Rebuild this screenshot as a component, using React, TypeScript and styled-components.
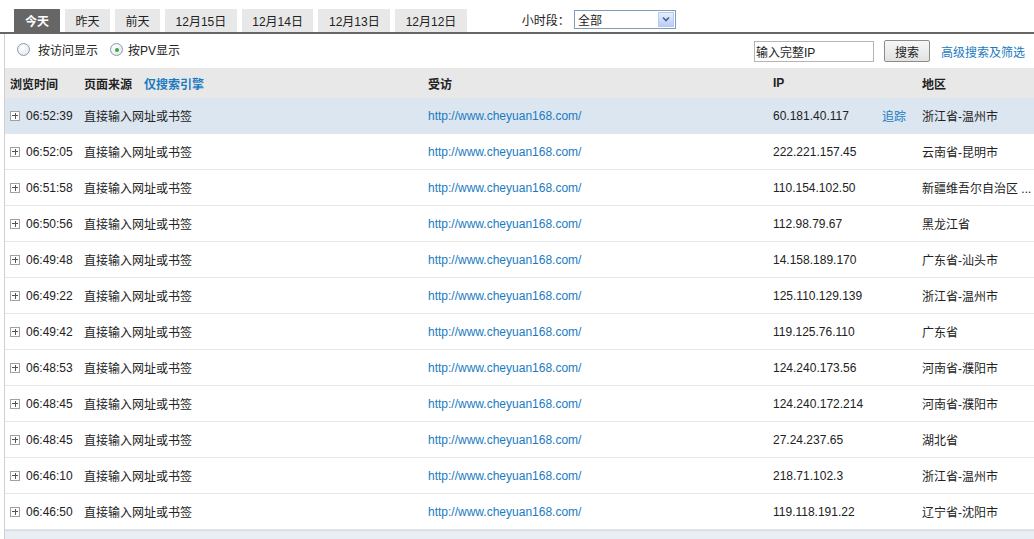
import { createGlobalStyle, styled } from "styled-components"

const GlobalStyle = createGlobalStyle`
  html, body {
    margin: 0;
    padding: 0;
    background: #fff;
    overflow: hidden;
  }
  body {
    font-family: "Liberation Sans", Arial, "Noto Sans CJK SC", sans-serif;
    font-size: 12px;
    color: #222;
  }
`

const Page = styled.div`
  width: 1034px;
  height: 539px;
  display: flex;
  flex-direction: column;
  overflow: hidden;
`

const TabBar = styled.div`
  display: flex;
  align-items: flex-end;
  gap: 5px;
  height: 32px;
  padding-left: 14px;
  border-bottom: 2px solid #666;
  flex-shrink: 0;
`

const Tab = styled.div<{ $active?: boolean }>`
  height: 23px;
  padding: 0 ${p => (p.$active ? "11px" : "10.5px")};
  display: flex;
  align-items: center;
  justify-content: center;
  background: ${p => (p.$active ? "#666" : "#e8e8e8")};
  color: ${p => (p.$active ? "#fff" : "#222")};
  font-weight: ${p => (p.$active ? "bold" : "normal")};
  font-size: 12px;
  cursor: pointer;
`

const HourPicker = styled.div`
  display: flex;
  align-items: center;
  margin-left: 50px;
  align-self: center;
  margin-top: 6px;
  gap: 4px;
`

const Select = styled.div`
  width: 102px;
  height: 19px;
  border: 1px solid #7f9db9;
  display: flex;
  align-items: center;
  justify-content: space-between;
  padding-left: 3px;
  box-sizing: border-box;
`

const SelectArrow = styled.div`
  width: 16px;
  height: 15px;
  margin-right: 1px;
  background: linear-gradient(#e6eefc, #b9cdf5);
  border: 1px solid #b7c9ef;
  box-sizing: border-box;
  display: flex;
  align-items: center;
  justify-content: center;
`

const Body = styled.div`
  margin-left: 4px;
  border-left: 1px solid #d0d0d0;
  display: flex;
  flex-direction: column;
  flex: 1;
`

const OptionsRow = styled.div`
  height: 34px;
  display: flex;
  align-items: center;
  padding-left: 12px;
  padding-right: 9px;
  box-sizing: border-box;
`

const RadioLabel = styled.label<{ $gap: number }>`
  display: flex;
  align-items: center;
  gap: ${p => p.$gap}px;
  margin-right: 12px;
  margin-top: -3px;
`

const RadioDot = styled.span<{ $checked?: boolean }>`
  width: 11px;
  height: 11px;
  border-radius: 50%;
  border: 1px solid #8a9bb0;
  background: radial-gradient(circle at 40% 35%, #fff, #dde3ea);
  display: inline-flex;
  align-items: center;
  justify-content: center;
  &::after {
    content: "";
    width: 4px;
    height: 4px;
    border-radius: 50%;
    background: ${p => (p.$checked ? "#3fa33f" : "transparent")};
  }
`

const Spacer = styled.div`
  flex: 1;
`

const IpInput = styled.div`
  width: 120px;
  height: 21px;
  border: 1px solid #b5b5b5;
  box-sizing: border-box;
  display: flex;
  align-items: center;
  padding-left: 1px;
  font-size: 12px;
`

const SearchButton = styled.div`
  width: 46px;
  height: 22px;
  margin-left: 10px;
  border: 1px solid #8c8c8c;
  border-radius: 2px;
  box-sizing: border-box;
  background: linear-gradient(#f7f7f7, #e2e2e2);
  display: flex;
  align-items: center;
  justify-content: center;
`

const Link = styled.span`
  color: #1a7bc1;
  cursor: pointer;
`

const AdvLink = styled(Link)`
  margin-left: 11px;
`

const cols = "74px 344px 345px 109px 40px 1fr"

const HeaderRow = styled.div`
  display: grid;
  grid-template-columns: ${cols};
  align-items: center;
  height: 30px;
  padding-left: 5px;
  background: #e8e8e8;
  font-weight: bold;
  flex-shrink: 0;
`

const HeaderSource = styled.div`
  display: flex;
  gap: 12px;
`

const Row = styled.div<{ $hl?: boolean }>`
  display: grid;
  grid-template-columns: ${cols};
  align-items: center;
  height: 36px;
  padding-left: 5px;
  box-sizing: border-box;
  border-bottom: 1px solid #e6e6e6;
  background: ${p => (p.$hl ? "#dce6f0" : "#fff")};
  flex-shrink: 0;
`

const TimeCell = styled.div`
  display: flex;
  align-items: center;
  gap: 6px;
`

const Expand = styled.span`
  width: 10px;
  height: 10px;
  border: 1px solid #a0a0a0;
  background: #fff;
  position: relative;
  box-sizing: border-box;
  &::before, &::after {
    content: "";
    position: absolute;
    background: #555;
  }
  &::before {
    left: 1px;
    right: 1px;
    top: 3.5px;
    height: 1px;
  }
  &::after {
    top: 1px;
    bottom: 1px;
    left: 3.5px;
    width: 1px;
  }
`

const UrlCell = styled.div`
  color: #1a7bc1;
`

const Region = styled.div`
  white-space: nowrap;
  overflow: hidden;
`

const StatusStrip = styled.div`
  flex: 1;
  background: #e9edf4;
  border-top: 1px solid #d6dbe4;
`

const tabs = ["今天", "昨天", "前天", "12月15日", "12月14日", "12月13日", "12月12日"]

const rows = [
  { time: "06:52:39", ip: "60.181.40.117", region: "浙江省-温州市", track: true },
  { time: "06:52:05", ip: "222.221.157.45", region: "云南省-昆明市" },
  { time: "06:51:58", ip: "110.154.102.50", region: "新疆维吾尔自治区 ..." },
  { time: "06:50:56", ip: "112.98.79.67", region: "黑龙江省" },
  { time: "06:49:48", ip: "14.158.189.170", region: "广东省-汕头市" },
  { time: "06:49:22", ip: "125.110.129.139", region: "浙江省-温州市" },
  { time: "06:49:42", ip: "119.125.76.110", region: "广东省" },
  { time: "06:48:53", ip: "124.240.173.56", region: "河南省-濮阳市" },
  { time: "06:48:45", ip: "124.240.172.214", region: "河南省-濮阳市" },
  { time: "06:48:45", ip: "27.24.237.65", region: "湖北省" },
  { time: "06:46:10", ip: "218.71.102.3", region: "浙江省-温州市" },
  { time: "06:46:50", ip: "119.118.191.22", region: "辽宁省-沈阳市" },
]

export default function App() {
  return (
    <Page>
      <GlobalStyle />
      <TabBar>
        {tabs.map((t, i) => (
          <Tab key={t} $active={i === 0}>{t}</Tab>
        ))}
        <HourPicker>
          <span>小时段：</span>
          <Select>
            <span>全部</span>
            <SelectArrow>
              <svg width="8" height="6" viewBox="0 0 8 6">
                <path d="M1 1.5 L4 4.5 L7 1.5" fill="none" stroke="#4d6185" strokeWidth="1.6" />
              </svg>
            </SelectArrow>
          </Select>
        </HourPicker>
      </TabBar>
      <Body>
        <OptionsRow>
          <RadioLabel $gap={8}>
            <RadioDot />
            按访问显示
          </RadioLabel>
          <RadioLabel $gap={5}>
            <RadioDot $checked />
            按PV显示
          </RadioLabel>
          <Spacer />
          <IpInput>输入完整IP</IpInput>
          <SearchButton>搜索</SearchButton>
          <AdvLink>高级搜索及筛选</AdvLink>
        </OptionsRow>
        <HeaderRow>
          <div>浏览时间</div>
          <HeaderSource>
            <span>页面来源</span>
            <Link>仅搜索引擎</Link>
          </HeaderSource>
          <div>受访</div>
          <div>IP</div>
          <div />
          <div>地区</div>
        </HeaderRow>
        {rows.map((r, i) => (
          <Row key={i} $hl={i === 0}>
            <TimeCell>
              <Expand />
              {r.time}
            </TimeCell>
            <div>直接输入网址或书签</div>
            <UrlCell>http://www.cheyuan168.com/</UrlCell>
            <div>{r.ip}</div>
            <div>{r.track ? <Link>追踪</Link> : null}</div>
            <Region>{r.region}</Region>
          </Row>
        ))}
        <StatusStrip />
      </Body>
    </Page>
  )
}
